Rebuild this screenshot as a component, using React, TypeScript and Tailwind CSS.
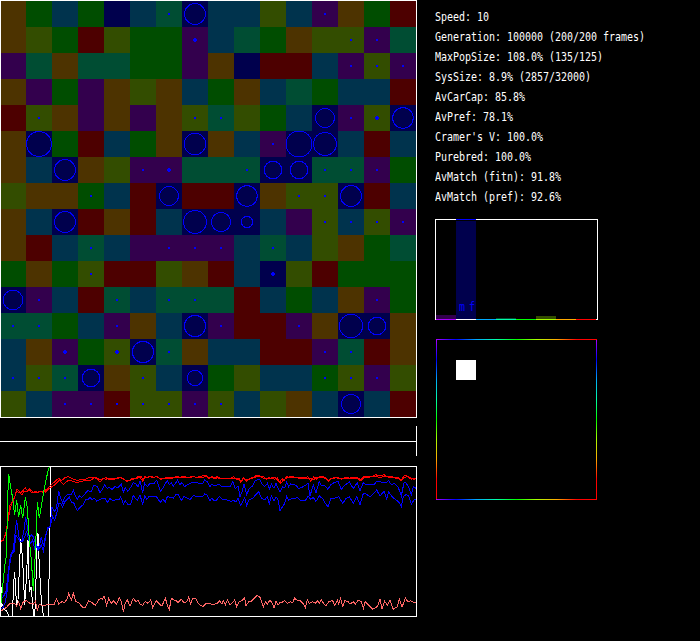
const cellColors: Record<string, string> = {
  R: "bg-[#4d0000]",
  O: "bg-[#4d3300]",
  Y: "bg-[#334d00]",
  G: "bg-[#004d00]",
  T: "bg-[#004d33]",
  B: "bg-[#00334d]",
  N: "bg-[#00004d]",
  P: "bg-[#33004d]",
}

const world = [
  "OGBGNBTNBBYBPOGR",
  "OYGRYGGPBTGOYYPT",
  "PTOTTGGPONRRBPYP",
  "OPGPOYOBGOBTGBBR",
  "RYOPOPOYTYGBNPYN",
  "ONGRBGONOBPNNBRB",
  "OBNOYPPTTTNNTTPG",
  "YOOGBRNRRNOYYNRB",
  "OBNRORBNNNBPYBYP",
  "ORBTBPPPPBTBYOGT",
  "GOGYRRYORBNYRGGG",
  "NPBRTBTTTRBGBOPG",
  "TTGBPOBNPRRPONNO",
  "BOPGYNTOBBRRPTRO",
  "BYTNOYBNGYBBGYPY",
  "YBPPRYYPYBYOBNBR",
]

// [column, row, radius]
const colonies = [
  [7, 0, 10.5], [12, 4, 9.5], [15, 4, 10.3], [1, 5, 12.5], [7, 5, 10.8], [11, 5, 13], [12, 5, 11.5],
  [2, 6, 10.5], [10, 6, 8.7], [11, 6, 8.7], [6, 7, 9.5], [9, 7, 10.3], [13, 7, 10.5],
  [2, 8, 10.5], [7, 8, 11.5], [8, 8, 9.6], [9, 8, 5.7], [0, 11, 9.8],
  [7, 12, 10.6], [13, 12, 11.6], [14, 12, 8.7], [5, 13, 10.6], [3, 14, 8.7], [7, 14, 7.7], [13, 15, 9.6],
]

// columns with a small population, one list per row
const dots = [
  [6, 12], [13, 14], [13, 14, 15], [], [1, 7, 8, 13], [10], [5, 9, 12, 13, 14], [3, 11, 12],
  [12, 13, 14, 15], [3, 6, 7, 8, 10], [3], [1, 4, 6, 7, 14], [0, 1, 4, 8, 11], [6, 12, 13],
  [0, 1, 2, 5, 12, 13, 14], [2, 3, 4, 5, 6, 7, 8],
]

const bigDots = [[7, 1], [14, 4], [6, 6], [10, 10], [2, 13], [4, 13]]

const stats = [
  "Speed: 10",
  "Generation: 100000 (200/200 frames)",
  "MaxPopSize: 108.0% (135/125)",
  "SysSize: 8.9% (2857/32000)",
  "AvCarCap: 85.8%",
  "AvPref: 78.1%",
  "Cramer's V: 100.0%",
  "Purebred: 100.0%",
  "AvMatch (fitn): 91.8%",
  "AvMatch (pref): 92.6%",
]

const bars = [
  { fill: "h-1 bg-[#33004d]", base: "bg-[#aa00ff]" },
  { fill: "h-[98px] bg-[#00004d]", base: "bg-white" },
  { fill: "h-0", base: "bg-[#00aaff]" },
  { fill: "h-px bg-[#004d33]", base: "bg-[#00ffaa]" },
  { fill: "h-0", base: "bg-[#00ff00]" },
  { fill: "h-[3px] bg-[#334d00]", base: "bg-[#aaff00]" },
  { fill: "h-0", base: "bg-[#ffaa00]" },
  { fill: "h-0", base: "bg-[#ff0000]" },
]

// The history is kept in pages that are 420 units wide, three units to a pixel
const pages = (...parts: string[]) =>
  parts
    .map((part, i) =>
      part.split(" ").map((p) => {
        const [x, y] = p.split(",").map(Number)
        return `${x + i * 420},${y}`
      }).join(" ")
    )
    .join(" ")

const redTail = [
  "0,168 4,170 8,180 14,170 22,172 30,168 40,172 50,170 62,176 74,174 84,172 95,176 110,168 120,172 132,168 145,174 158,170 172,172 190,167 200,167 206,173 216,170 224,173 232,170 242,175 256,175 270,176 280,170 290,178 298,176 302,186 310,174 320,184 328,176 340,172 350,166 360,168 370,170 380,178 386,172 396,176 404,172 412,180",
  "0,186 6,176 12,182 20,170 30,173 36,170 46,172 56,175 66,173 76,172 84,170 92,184 102,170 108,178 118,170 128,170 138,173 144,182 154,174 164,174 174,173 184,178 194,173 204,176 214,172 222,176 232,172 242,180 252,168 264,168 274,170 286,164 300,168 312,164 320,170 328,168 336,173 346,172 354,176 364,180 372,168 378,167 386,172 394,178 402,174 408,176",
]

const redTail2 = [
  "0,172 8,184 14,172 22,174 30,170 40,173 50,168 62,178 74,174 84,176 95,172 110,172 120,174 132,172 145,172 158,170 172,172 190,172 200,168 206,175 216,171 224,176 232,173 242,177 256,176 270,175 280,176 290,174 298,180 302,188 310,176 320,178 328,178 340,173 350,170 360,170 370,174 380,175 386,177 396,172 404,178 412,174",
  "0,190 6,186 12,178 20,174 30,170 36,174 46,172 56,173 66,176 76,176 84,176 92,174 102,180 108,172 118,174 128,172 138,176 144,184 154,176 164,172 174,175 184,176 194,175 204,173 214,176 222,172 232,176 242,182 252,172 264,174 274,168 286,170 300,172 312,170 320,168 328,173 336,170 346,175 354,173 364,182 372,174 378,171 386,170 394,175 402,178 408,174",
]

const series = [
  {
    color: "stroke-white",
    points: pages("2,435 4,560 8,555 12,568 20,572 26,588 38,588 40,500 44,455 50,562 54,540 58,450 62,358 68,420 74,555 80,460 84,360 88,515 94,500 98,560 102,588 106,560 110,400 114,340 118,440 124,540 130,588 146,588 146,478 149,476 149,320 151,318 151,140"),
  },
  {
    color: "stroke-[#ff6666]",
    points: pages(
      "0,575 10,568 20,562 28,552 36,550 44,550 50,558 56,545 62,565 70,545 80,542 90,550 100,552 106,544 112,570 118,552 130,558 140,554 150,552 162,554 170,536 176,552 186,545 194,548 202,535 206,520 214,540 220,520 228,545 238,550 248,562 256,562 266,542 276,548 286,556 296,540 304,535 308,538 312,527 320,556 326,535 334,550 340,542 350,552 358,532 364,545 370,575 376,548 382,540 390,558 400,535 408,545 414,540",
      "0,552 8,556 16,544 24,550 32,540 38,562 48,542 58,552 66,558 76,534 82,556 88,568 94,534 102,540 108,540 114,548 124,538 132,548 140,545 146,532 152,552 158,535 168,536 176,552 188,560 198,550 210,550 216,554 232,550 238,542 246,552 250,542 256,555 262,540 270,554 276,550 284,540 290,560 298,545 308,540 314,532 318,558 326,545 334,544 342,535 352,526 360,532 370,560 376,546 382,552 390,540 396,548 402,564 408,544 414,555",
      "0,548 8,546 14,542 22,550 32,545 38,548 44,534 50,540 60,542 70,552 76,564 82,538 88,550 98,545 106,550 112,542 118,550 124,540 132,552 138,558 146,545 158,542 164,556 172,540 176,552 182,534 188,562 194,542 204,545 210,552 220,545 226,552 234,542 244,544 250,565 256,544 266,556 278,568 288,562 294,556 300,538 306,566 314,544 322,556 330,540 340,568 352,560 358,536 366,562 376,534 384,546 392,542 400,546 408,546"
    ),
  },
  {
    color: "stroke-[#ff0000]",
    points: pages(
      "0,364 9,362 18,340 22,318 27,285 32,262 36,245 42,238 46,225 50,208 56,212 62,218 68,212 72,208 76,203 82,212 88,207 94,212 100,217 106,213 112,217 118,213 130,217 136,210 142,208 150,198 156,192 164,186 170,180 176,175 184,182 190,178 196,172 206,170 214,174 222,178 232,182 240,178 248,180 256,178 264,174 272,172 280,172 290,174 300,178 310,176 318,173 326,178 334,175 342,180 350,174 360,171 370,178 380,182 390,180 398,174 408,174 414,170",
      ...redTail
    ),
  },
  {
    color: "stroke-[#ff0000]",
    points: pages(
      "0,364 9,362 18,335 24,300 30,255 36,250 42,235 50,214 58,218 66,225 72,214 80,214 88,212 96,218 104,216 112,218 120,214 136,216 144,208 150,204 160,198 168,190 178,180 190,194 200,184 210,180 220,185 232,188 244,184 256,182 270,182 284,173 292,176 300,187 310,176 318,178 326,176 334,178 342,174 350,177 360,173 370,176 380,184 390,182 398,178 408,176 414,174",
      ...redTail2
    ),
  },
  {
    color: "stroke-[#0000ff]",
    points: pages(
      "0,535 10,530 18,515 22,480 28,430 32,405 40,390 44,350 50,300 56,345 60,365 66,362 72,330 77,290 82,320 88,355 94,345 100,350 106,370 114,390 120,368 124,350 130,378 136,350 142,330 150,318 156,262 164,275 170,262 176,212 182,235 188,248 194,232 200,226 208,222 214,224 220,210 226,228 232,238 238,228 244,232 250,228 256,220 264,212 274,215 280,198 286,196 292,200 300,218 306,210 314,194 322,206 328,202 336,208 344,200 354,203 364,192 370,216 376,204 384,214 392,202 400,188 406,190 414,200",
      "0,182 4,200 8,218 14,190 22,200 30,190 42,190 50,181 58,205 62,214 70,202 76,190 82,182 88,194 94,188 100,198 108,188 112,180 120,194 126,188 134,200 142,194 156,188 166,186 178,190 188,190 194,180 202,186 210,202 214,192 226,198 236,192 246,200 256,200 270,200 278,184 286,206 294,198 300,230 306,215 312,192 320,224 328,205 338,198 344,184 352,179 360,180 366,192 374,200 382,190 388,208 394,192 402,205 408,190 414,205",
      "0,216 8,200 14,204 20,186 26,200 32,192 40,194 48,196 56,206 66,202 76,196 84,190 90,228 100,194 108,218 118,184 124,196 134,196 144,208 152,194 162,188 174,184 184,208 194,196 208,186 220,206 232,188 240,212 250,188 256,192 284,192 290,184 304,186 318,188 326,182 334,194 342,190 354,200 364,228 372,188 378,188 386,202 394,224 400,200 408,205"
    ),
  },
  {
    color: "stroke-[#0000ff]",
    points: pages(
      "0,566 10,562 16,545 22,510 28,440 34,405 42,395 48,345 54,355 60,365 68,365 74,350 80,335 86,360 92,370 98,360 104,385 110,375 116,390 124,375 130,392 138,345 144,322 150,320 158,290 164,300 170,280 176,250 182,250 188,262 194,245 200,240 208,232 214,246 220,246 226,260 232,272 240,262 250,254 256,240 264,238 270,232 276,238 284,236 290,243 300,238 308,235 314,234 322,248 330,236 340,242 350,238 356,240 362,230 370,252 376,242 384,254 392,252 400,226 406,236 412,240",
      "0,225 8,252 14,228 20,238 28,229 40,229 48,228 56,240 62,246 68,238 76,246 82,230 90,232 100,234 108,224 114,222 124,242 132,230 142,234 150,240 160,226 172,230 182,230 188,230 194,222 202,226 210,242 216,234 222,242 230,240 238,230 248,238 260,240 272,244 282,242 288,246 294,235 302,256 314,234 320,256 328,238 338,236 346,225 356,215 364,234 374,240 382,230 388,252 394,228 402,244 408,230 414,240",
      "0,272 8,260 14,250 20,230 26,240 34,236 44,236 52,232 60,240 70,240 76,242 84,228 92,238 100,232 108,244 118,228 130,238 136,250 144,260 152,236 164,234 176,230 188,250 198,236 208,230 220,250 230,230 240,254 250,220 258,222 270,230 282,220 290,210 300,228 312,214 320,236 326,216 336,230 346,238 356,246 364,260 370,230 378,224 386,228 394,252 402,240 408,238"
    ),
  },
  {
    color: "stroke-[#00ff00]",
    points: pages("2,560 6,520 14,440 20,400 22,260 26,162 32,200 38,235 44,285 50,240 56,292 62,255 68,295 76,232 82,262 88,360 94,420 100,512 106,400 112,245 118,295 124,258 130,222 138,180 146,145 150,141"),
  },
]

const World = () => {
  return (
    <div className="relative w-[417px] h-[418px]">
      <div className="grid grid-cols-[25px_repeat(15,26px)] auto-rows-[26px] border border-white">
        {world.join("").split("").map((c, i) => (
          <div key={i} className={cellColors[c]} />
        ))}
      </div>
      <svg className="absolute inset-0" width="417" height="418" shapeRendering="crispEdges">
        {colonies.map(([x, y, r], i) => (
          <circle key={i} cx={x * 26 + 13} cy={y * 26 + 14} r={r} className="fill-none stroke-[#0000ff]" />
        ))}
        {dots.map((row, y) =>
          row.map((x) => (
            <rect key={`${x}-${y}`} x={x * 26 + 12} y={y * 26 + 13} width="2" height="2" className="fill-[#0000ff]" />
          ))
        )}
        {bigDots.map(([x, y], i) => (
          <path key={i} d={`M${x * 26 + 11} ${y * 26 + 13}h1v-1h2v1h1v2h-1v1h-2v-1h-1z`} className="fill-[#0000ff]" />
        ))}
      </svg>
    </div>
  )
}

const Timeline = () => {
  return (
    <div className="mt-2 h-[30px] w-[417px] border-r border-white flex flex-col pt-[15px]">
      <div className="h-px bg-white" />
    </div>
  )
}

const History = () => {
  return (
    <div className="mt-2.5 w-[417px] h-[151px]">
      <svg width="417" height="151" viewBox="0 138 1251 453" shapeRendering="crispEdges" fill="none" strokeWidth="3">
        {series.map((s, i) => (
          <polyline key={i} points={s.points} className={s.color} />
        ))}
        <rect x="1.5" y="139.5" width="1248" height="450" className="stroke-white" />
      </svg>
    </div>
  )
}

const Stats = () => {
  return (
    <div className="pt-2 font-['DejaVu_Sans_Mono',monospace] text-[10px] leading-5 tracking-[-0.02px] text-white">
      {stats.map((line) => (
        <p key={line} className="h-5 whitespace-pre origin-center scale-y-115">{line}</p>
      ))}
    </div>
  )
}

const Histogram = () => {
  return (
    <div className="relative mt-[11px] w-[163px] h-[101px] border-x border-t border-white">
      <div className="flex h-[100px] items-end">
        {bars.map((bar, i) => (
          <div key={i} className="w-5">
            <div className={bar.fill} />
            <div className={`h-px ${bar.base}`} />
          </div>
        ))}
        <div className="w-px h-px bg-white" />
      </div>
      <div className="absolute left-5 -top-px w-5 h-px bg-[#0000ff]" />
      <p className="absolute left-[23px] top-20 font-['DejaVu_Sans_Mono',monospace] text-[10px] leading-4 whitespace-pre text-[#0000ff] scale-y-115">
        <span>m</span>
        <span className="ml-1">f</span>
      </p>
    </div>
  )
}

const Preference = () => {
  return (
    <div className="mt-[19px] ml-px w-[161px] h-[161px] flex flex-col">
      <div className="h-px bg-[linear-gradient(to_right,#aa00ff,#0000ff_12.5%,#00aaff_25%,#00ffaa_37.5%,#00ff00_50%,#aaff00_62.5%,#ffaa00_75%,#ff0000_87.5%)]" />
      <div className="flex h-[159px] justify-between">
        <div className="w-px bg-[linear-gradient(#aa00ff,#0000ff_12.5%,#00aaff_25%,#00ffaa_37.5%,#00ff00_50%,#aaff00_62.5%,#ffaa00_75%,#ff0000_87.5%)]" />
        <div className="grow pl-[19px] pt-5">
          <div className="size-5 bg-white" />
        </div>
        <div className="w-px bg-[linear-gradient(#aa00ff,#0000ff_12.5%,#00aaff_25%,#00ffaa_37.5%,#00ff00_50%,#aaff00_62.5%,#ffaa00_75%,#ff0000_87.5%)]" />
      </div>
      <div className="h-px bg-[linear-gradient(to_right,#aa00ff,#0000ff_12.5%,#00aaff_25%,#00ffaa_37.5%,#00ff00_50%,#aaff00_62.5%,#ffaa00_75%,#ff0000_87.5%)]" />
    </div>
  )
}

const App = () => {
  return (
    <main className="w-[700px] h-[641px] bg-black flex gap-[18px] overflow-hidden">
      <div className="w-[417px] shrink-0">
        <World />
        <Timeline />
        <History />
      </div>
      <div className="grow">
        <Stats />
        <Histogram />
        <Preference />
      </div>
    </main>
  )
}

export default App
